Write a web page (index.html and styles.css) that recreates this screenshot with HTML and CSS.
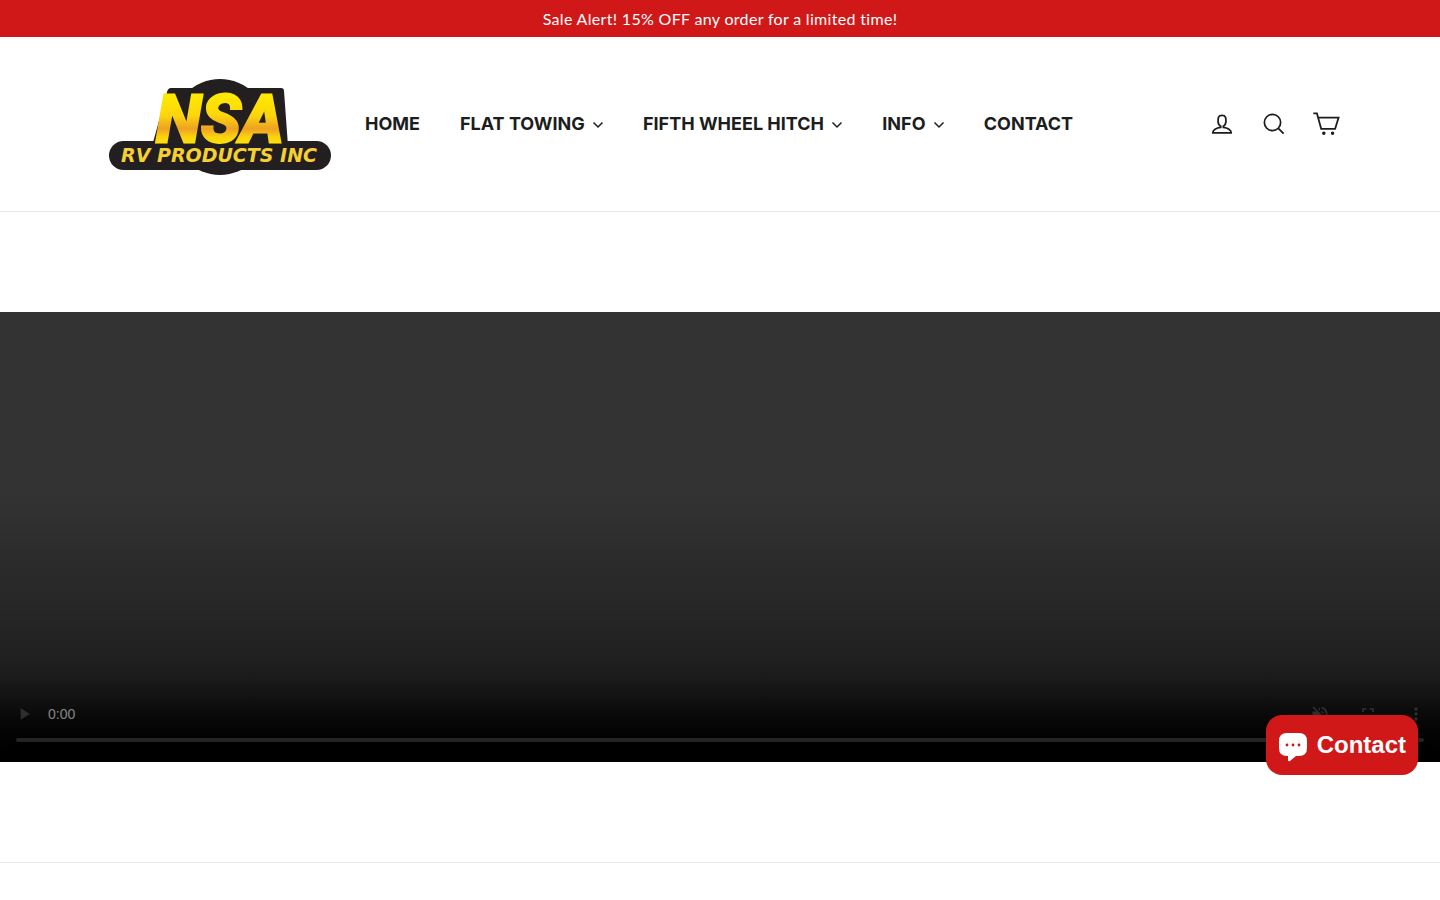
FILE: index.html
```html
<!DOCTYPE html>
<html lang="en">
<head>
    <meta charset="utf-8">
    <meta name="viewport" content="width=device-width, initial-scale=1">
    <title>NSA RV Products Inc</title>
    <link rel="stylesheet" href="styles.css">
</head>
<body>
    <div class="announcement">Sale Alert! 15% OFF any order for a limited time!</div>

    <header class="site-header">
        <a class="logo" href="#" aria-label="NSA RV Products Inc">
            <svg viewBox="0 0 240 114" role="img">
                <defs>
                    <linearGradient id="gold" x1="0" y1="0" x2="0" y2="1">
                        <stop offset="0.2" stop-color="#ffe800"/>
                        <stop offset="0.45" stop-color="#fcd60c"/>
                        <stop offset="0.62" stop-color="#eea123"/>
                        <stop offset="0.72" stop-color="#fbd010"/>
                        <stop offset="0.85" stop-color="#ffea00"/>
                    </linearGradient>
                </defs>
                <g fill="#231f20">
                    <ellipse cx="120" cy="60" rx="48" ry="48"/>
                    <path d="M71 21H181Q184 21 184 24L188 79H52L67 25Q68 21 71 21Z"/>
                    <rect x="9" y="74" width="222" height="29" rx="14.5"/>
                </g>
                <text class="logo-name" x="56" y="75" fill="url(#gold)" stroke="url(#gold)">NSA</text>
                <text class="logo-sub" x="21" y="95" fill="#f6cf32">RV PRODUCTS INC</text>
            </svg>
        </a>

        <nav class="site-nav">
            <a href="#">HOME</a>
            <a href="#">FLAT TOWING <svg class="chevron" viewBox="0 0 10 6"><path d="M0.500 0.500l4.500 4.500 4.500-4.500"/></svg></a>
            <a href="#">FIFTH WHEEL HITCH <svg class="chevron" viewBox="0 0 10 6"><path d="M0.500 0.500l4.500 4.500 4.500-4.500"/></svg></a>
            <a href="#">INFO <svg class="chevron" viewBox="0 0 10 6"><path d="M0.500 0.500l4.500 4.500 4.500-4.500"/></svg></a>
            <a href="#">CONTACT</a>
        </nav>

        <div class="header-icons">
            <a href="#" aria-label="Log in">
                <svg viewBox="0 0 64 64"><path d="M35 39.84v-2.53c3.3-1.91 6-6.66 6-11.41 0-7.63 0-13.82-9-13.82s-9 6.19-9 13.82c0 4.75 2.7 9.51 6 11.41v2.53c-10.18.85-18 6-18 12.16h42c0-6.19-7.82-11.31-18-12.16z"/></svg>
            </a>
            <a href="#" aria-label="Search">
                <svg viewBox="0 0 64 64"><path d="M47.16 28.58A18.58 18.58 0 1 1 28.58 10a18.58 18.58 0 0 1 18.58 18.58zM54 54L41.94 42"/></svg>
            </a>
            <a href="#" aria-label="Cart">
                <svg viewBox="0 0 64 64"><path d="M14 17.44h46.79l-7.94 25.61H20.96l-9.65-35.1H3"/><circle cx="27" cy="53" r="2"/><circle cx="47" cy="53" r="2"/></svg>
            </a>
        </div>
    </header>

    <main class="video-section">
        <div class="video-wrapper">
            <video class="video" controls muted></video>
        </div>
    </main>

    <button class="chat" type="button">
        <svg viewBox="0 0 30 30">
            <path fill="#fff" d="M9 3h12q8 0 8 8v7q0 8-8 8h-3l-6 5q-2 1-2-1v-4H9q-8 0-8-8v-7q0-8 8-8Z"/>
            <g fill="#d11818"><circle cx="9" cy="15" r="1.4"/><circle cx="15" cy="15" r="1.4"/><circle cx="21" cy="15" r="1.4"/></g>
        </svg>
        Contact
    </button>
</body>
</html>
```
FILE: styles.css
```css
* {
    box-sizing: border-box;
}

body {
    margin: 0;
    background-color: #fff;
    color: #1c1d1d;
    font-family: Lato, sans-serif;
}

a {
    color: inherit;
    text-decoration: none;
}

.announcement {
    padding: 8px 20px;
    background-color: #d11818;
    color: #fff;
    font-size: 16px;
    line-height: 21px;
    letter-spacing: 0.02em;
    text-align: center;
}

.site-header {
    display: flex;
    align-items: center;
    padding: 30px 100px;
    border-bottom: 1px solid #e8e8e1;
}

.logo {
    flex: none;
    width: 240px;
    margin-right: 5px;
}

.logo svg {
    display: block;
    width: 100%;
}

.logo-name {
    font: italic 700 66px Roboto, sans-serif;
    stroke-width: 3px;
}

.logo-sub {
    font: italic bold 19px "DejaVu Sans", sans-serif;
}

.site-nav {
    display: flex;
    flex: 1;
    font: 700 18px/24px Inter, sans-serif;
    white-space: nowrap;
}

.site-nav a {
    padding: 12px 20px;
}

.chevron {
    width: 10px;
    height: 6px;
    margin-left: 4px;
    vertical-align: middle;
    fill: none;
    stroke: #1c1d1d;
    stroke-width: 1.5px;
    overflow: visible;
}

.header-icons {
    display: flex;
    gap: 24px;
}

.header-icons svg {
    display: block;
    width: 28px;
    height: 28px;
    fill: none;
    stroke: #1c1d1d;
    stroke-width: 4px;
}

.video-section {
    padding: 100px 0;
    border-bottom: 1px solid #e8e8e8;
}

.video-wrapper {
    position: relative;
}

.video-wrapper::after {
    content: "";
    position: absolute;
    inset: 0;
    background: linear-gradient(to bottom, rgba(0, 0, 0, 0) 40%, rgba(0, 0, 0, 0.6));
    pointer-events: none;
}

.video {
    display: block;
    width: 100%;
    height: 50vh;
}

.video::-webkit-media-controls-current-time-display {
    font-family: "Liberation Sans", sans-serif;
}

.chat {
    position: fixed;
    right: 22px;
    bottom: 125px;
    display: flex;
    align-items: center;
    gap: 9px;
    height: 60px;
    padding: 0 12px;
    border: 0;
    border-radius: 16px;
    background-color: #d11818;
    color: #fff;
    font: bold 24px "Liberation Sans", sans-serif;
    cursor: pointer;
}

.chat svg {
    width: 30px;
    height: 30px;
    overflow: visible;
}
```
